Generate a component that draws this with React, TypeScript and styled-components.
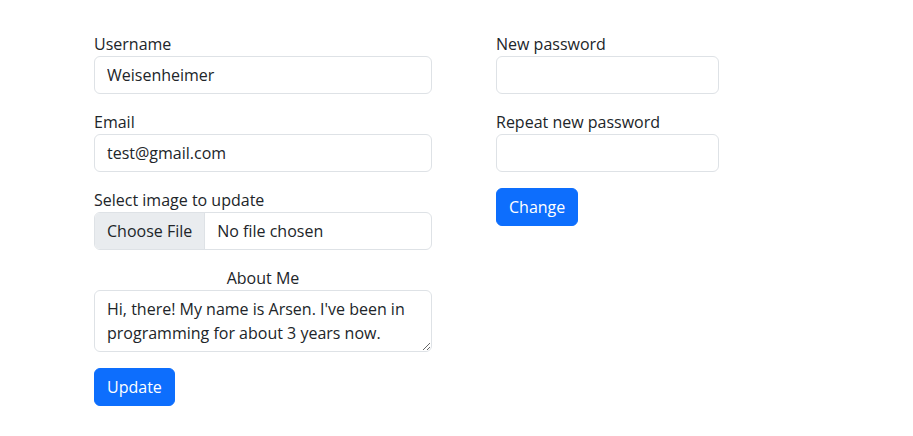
import styled, { createGlobalStyle } from 'styled-components';

const GlobalStyle = createGlobalStyle`
    body {
        margin: 0;
        background: #fff;
        color: #212529;
        font-family: "Open Sans", "Noto Sans", sans-serif;
        font-size: 16px;
        line-height: 1.5;
    }
    * {
        box-sizing: border-box;
    }
`;

const Page = styled.div`
    display: flex;
    gap: 64px;
    padding: 32px 0 0 94px;
`;

const Column = styled.form<{ $width: number }>`
    display: flex;
    flex-direction: column;
    gap: 16px;
    width: ${p => p.$width}px;
`;

const Field = styled.div<{ $center?: boolean }>`
    display: flex;
    flex-direction: column;
    text-align: ${p => p.$center ? 'center' : 'left'};
`;

const Label = styled.label`
    display: block;
    height: 24px;
`;

const Input = styled.input`
    display: block;
    width: 100%;
    height: 38px;
    padding: 6px 12px;
    font: inherit;
    color: #212529;
    background: #fff;
    border: 1px solid #dee2e6;
    border-radius: 6px;
    outline: none;
`;

const FileInput = styled(Input)`
    padding: 0;
    overflow: hidden;
    line-height: 36px;

    &::file-selector-button {
        height: 36px;
        margin: 0 12px 0 0;
        padding: 0 12px;
        font: inherit;
        color: #212529;
        background: #e9ecef;
        border: 0;
        border-right: 1px solid #dee2e6;
        border-radius: 0;
    }
`;

const TextArea = styled.textarea`
    display: block;
    width: 100%;
    height: 62px;
    padding: 6px 12px;
    font: inherit;
    line-height: 1.5;
    color: #212529;
    border: 1px solid #dee2e6;
    border-radius: 6px;
    outline: none;
    text-align: left;
`;

const Button = styled.button`
    align-self: flex-start;
    height: 38px;
    padding: 6px 12px;
    font: inherit;
    color: #fff;
    background: #0d6efd;
    border: 1px solid #0d6efd;
    border-radius: 6px;
`;

export default function App() {
    return <>
        <GlobalStyle />
        <Page>
            <Column $width={338}>
                <Field>
                    <Label>Username</Label>
                    <Input defaultValue='Weisenheimer' />
                </Field>
                <Field>
                    <Label>Email</Label>
                    <Input type='email' defaultValue='test@gmail.com' />
                </Field>
                <Field>
                    <Label>Select image to update</Label>
                    <FileInput type='file' />
                </Field>
                <Field $center>
                    <Label>About Me</Label>
                    <TextArea rows={2} defaultValue="Hi, there! My name is Arsen. I've been in programming for about 3 years now." />
                </Field>
                <Button type='button'>Update</Button>
            </Column>
            <Column $width={223}>
                <Field>
                    <Label>New password</Label>
                    <Input type='password' />
                </Field>
                <Field>
                    <Label>Repeat new password</Label>
                    <Input type='password' />
                </Field>
                <Button type='button'>Change</Button>
            </Column>
        </Page>
    </>;
}
